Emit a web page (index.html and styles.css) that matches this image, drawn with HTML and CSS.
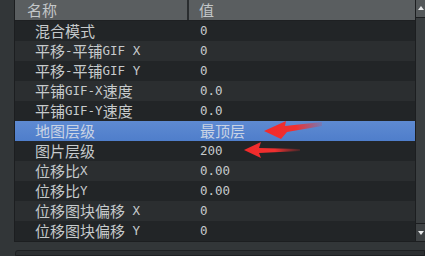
FILE: index.html
```html
<!DOCTYPE html>
<html>
<head>
    <title>属性</title>
    <link rel="stylesheet" href="styles.css">
</head>
<body>
    <div class="frame">
        <div class="props">
            <div class="grid">
                <div class="row head">
                    <div class="cell name">名称</div>
                    <div class="cell value">值</div>
                </div>
                <div class="row">
                    <div class="cell name">混合模式</div>
                    <div class="cell value"><span class="m">0</span></div>
                </div>
                <div class="row alt">
                    <div class="cell name">平移<span class="m">-</span>平铺<span class="m">GIF X</span></div>
                    <div class="cell value"><span class="m">0</span></div>
                </div>
                <div class="row">
                    <div class="cell name">平移<span class="m">-</span>平铺<span class="m">GIF Y</span></div>
                    <div class="cell value"><span class="m">0</span></div>
                </div>
                <div class="row alt">
                    <div class="cell name">平铺<span class="m">GIF-X</span>速度</div>
                    <div class="cell value"><span class="m">0.0</span></div>
                </div>
                <div class="row">
                    <div class="cell name">平铺<span class="m">GIF-Y</span>速度</div>
                    <div class="cell value"><span class="m">0.0</span></div>
                </div>
                <div class="row selected">
                    <div class="cell name">地图层级</div>
                    <div class="cell value">最顶层</div>
                </div>
                <div class="row">
                    <div class="cell name">图片层级</div>
                    <div class="cell value"><span class="m">200</span></div>
                </div>
                <div class="row alt">
                    <div class="cell name">位移比<span class="m">X</span></div>
                    <div class="cell value"><span class="m">0.00</span></div>
                </div>
                <div class="row">
                    <div class="cell name">位移比<span class="m">Y</span></div>
                    <div class="cell value"><span class="m">0.00</span></div>
                </div>
                <div class="row alt">
                    <div class="cell name">位移图块偏移<span class="m"> X</span></div>
                    <div class="cell value"><span class="m">0</span></div>
                </div>
                <div class="row">
                    <div class="cell name">位移图块偏移<span class="m"> Y</span></div>
                    <div class="cell value"><span class="m">0</span></div>
                </div>
            </div>
            <div class="scrollbar">
                <div class="sb-btn up"></div>
                <div class="sb-track"></div>
                <div class="sb-btn down"></div>
            </div>
        </div>
        <div class="lower"></div>
    </div>

    <!-- red annotation arrows -->
    <svg class="marks" width="425" height="256" viewBox="0 0 425 256">
        <defs>
            <linearGradient id="fade" x1="0" y1="0" x2="1" y2="0">
                <stop offset="0" stop-color="#f22a2a"/>
                <stop offset="0.55" stop-color="#f03030"/>
                <stop offset="1" stop-color="#f03030" stop-opacity="0.15"/>
            </linearGradient>
        </defs>
        <polygon points="264,131 286,121 285,126 322,122 322,126 287,132 281,139" fill="url(#fade)"/>
        <polygon points="244,150 261,142 259,148 300,149 300,151 259,153 261,158" fill="url(#fade)"/>
    </svg>
</body>
</html>
```

FILE: styles.css
```css
body {
    margin: 0;
    width: 425px;
    height: 256px;
    overflow: hidden;
    background-color: #323638;
    font-family: 'Noto Sans CJK SC', 'DejaVu Sans', sans-serif;
    font-size: 15px;
    color: #c6cacc;
    position: relative;
}

.frame {
    display: flex;
    flex-direction: column;
    height: 256px;
}

.props {
    display: flex;
    margin-left: 14px;
    height: 242px;
    border-left: 1px solid #1c1e20;
    border-bottom: 1px solid #1c1e20;
    box-sizing: border-box;
}

.grid {
    flex: 1;
    display: flex;
    flex-direction: column;
}

.row {
    display: flex;
    height: 20px;
    align-items: center;
    background-color: #222527;
    line-height: 20px;
    white-space: pre;
}

.row.alt {
    background-color: #2b2e30;
}

.row.selected {
    background: linear-gradient(#5e8ad2, #4f7ecb);
    color: #c9d3e4;
}

.row.head {
    height: 21px;
    background-color: #5a5e60;
    border-bottom: 1px solid #1e2022;
    box-sizing: border-box;
    color: #c3c7c9;
}

.cell {
    height: 100%;
    display: flex;
    align-items: center;
}

.name {
    width: 174px;
    padding-left: 20px;
    box-sizing: border-box;
}

.value {
    flex: 1;
    padding-left: 11px;
}

.head .name {
    padding-left: 12px;
    border-right: 2px solid #2a2d2f;
}

.head .value {
    padding-left: 10px;
}

.m {
    font-family: 'DejaVu Sans Mono', monospace;
    font-size: 12.5px;
}

.scrollbar {
    width: 9px;
    border-left: 1px solid #1c1e20;
    display: flex;
    flex-direction: column;
    background-color: #3c4042;
}

.sb-btn {
    height: 17px;
    background-color: #54585a;
    position: relative;
}

.sb-btn.up {
    border-bottom: 1px solid #1c1e20;
}

.sb-btn.down {
    border-top: 1px solid #1c1e20;
    background-color: #3e4244;
}

.sb-btn::after {
    content: "";
    position: absolute;
    left: 2px;
    top: 6px;
    border-left: 3px solid transparent;
    border-right: 3px solid transparent;
}

.sb-btn.up::after {
    border-bottom: 4px solid #e6e8e9;
}

.sb-btn.down::after {
    top: 7px;
    border-top: 4px solid #e6e8e9;
}

.sb-track {
    flex: 1;
    background-color: #3a3e40;
}

.lower {
    flex: 1;
    margin-top: 8px;
    margin-left: 15px;
    border: 1px solid #1e2022;
    border-radius: 3px 0 0 0;
    background-color: #2c2f31;
}

.marks {
    position: absolute;
    left: 0;
    top: 0;
}
```
